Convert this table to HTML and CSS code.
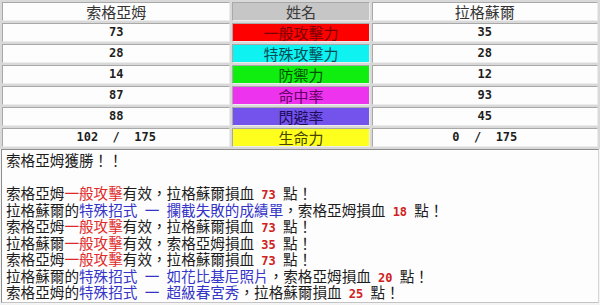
FILE: index.html
```html
<!DOCTYPE html>
<html lang="zh-Hant">
<head>
<meta charset="utf-8">
<title>對戰結果</title>
<link rel="stylesheet" href="styles.css">
</head>
<body>
<table class="stats">
  <tr>
    <td class="name side-l">索格亞姆</td>
    <td class="label head">姓名</td>
    <td class="name side-r">拉格蘇爾</td>
  </tr>
  <tr>
    <td class="num">73</td>
    <td class="label atk">一般攻擊力</td>
    <td class="num">35</td>
  </tr>
  <tr>
    <td class="num">28</td>
    <td class="label sp">特殊攻擊力</td>
    <td class="num">28</td>
  </tr>
  <tr>
    <td class="num">14</td>
    <td class="label def">防禦力</td>
    <td class="num">12</td>
  </tr>
  <tr>
    <td class="num">87</td>
    <td class="label hit">命中率</td>
    <td class="num">93</td>
  </tr>
  <tr>
    <td class="num">88</td>
    <td class="label eva">閃避率</td>
    <td class="num">45</td>
  </tr>
  <tr>
    <td class="num">102  /  175</td>
    <td class="label hp">生命力</td>
    <td class="num">0  /  175</td>
  </tr>
</table>
<div class="log">
  <div class="line">索格亞姆獲勝！！</div>
  <div class="line blank">&nbsp;</div>
  <div class="line">索格亞姆<span class="red">一般攻擊</span>有效，拉格蘇爾損血<span class="dmg"> 73 </span>點！</div>
  <div class="line">拉格蘇爾的<span class="blue">特殊招式 一 攔截失敗的成績單</span>，索格亞姆損血<span class="dmg"> 18 </span>點！</div>
  <div class="line">索格亞姆<span class="red">一般攻擊</span>有效，拉格蘇爾損血<span class="dmg"> 73 </span>點！</div>
  <div class="line">拉格蘇爾<span class="red">一般攻擊</span>有效，索格亞姆損血<span class="dmg"> 35 </span>點！</div>
  <div class="line">索格亞姆<span class="red">一般攻擊</span>有效，拉格蘇爾損血<span class="dmg"> 73 </span>點！</div>
  <div class="line">拉格蘇爾的<span class="blue">特殊招式 一 如花比基尼照片</span>，索格亞姆損血<span class="dmg"> 20 </span>點！</div>
  <div class="line">索格亞姆的<span class="blue">特殊招式 一 超級春宮秀</span>，拉格蘇爾損血<span class="dmg"> 25 </span>點！</div>
</div>
</body>
</html>
```
FILE: styles.css
```css
html, body {
  margin: 0;
  padding: 0;
}
body {
  background: #f4f4f4;
  width: 600px;
  height: 305px;
  overflow: hidden;
  font-family: "Noto Sans CJK TC", "Noto Sans CJK SC", sans-serif;
  color: #222;
}
.stats {
  width: 600px;
  border-collapse: separate;
  border-spacing: 2px;
  background: #d9d9d9;
  table-layout: fixed;
}
.stats td {
  height: 17px;
  padding: 0;
  border: 1px solid;
  border-color: #a8a8a8 #ececec #ececec #a8a8a8;
  background: #fdfdfd;
  text-align: center;
  vertical-align: middle;
  line-height: 17px;
  white-space: pre;
  overflow: hidden;
}
.side-l { width: 226px; }
.side-r { width: 224px; }
.name {
  font-size: 15px;
  color: #333;
}
.num {
  font-family: "DejaVu Sans Mono", "Liberation Mono", monospace;
  font-weight: bold;
  font-size: 12px;
  color: #1e1e1e;
}
.label {
  width: 135px;
  font-size: 15px;
}
.head {
  background-color: #c6c6c6 !important;
  background-image: radial-gradient(circle, #b2b2b2 0.6px, transparent 0.9px);
  background-size: 3px 3px;
  color: #3a3a3a;
}
.atk { background: #ff0000 !important; color: #780000; }
.sp { background: #0ff2f2 !important; color: #004e55; }
.def { background: #10ee10 !important; color: #005200; }
.hit { background: #ee33ee !important; color: #650065; }
.eva { background: #7452ec !important; color: #1c0e5c; }
.hp { background: #ffff1e !important; color: #454500; }

.log {
  margin: 0 1px;
  height: 150px;
  border: 1px solid;
  border-color: #8e8e8e #d6d6d6 #c4c4c4 #8e8e8e;
  background: #fdfdfd;
  padding: 2px 3px 0 4px;
  font-size: 14.6px;
  line-height: 16.5px;
  color: #1c1c1c;
  overflow: hidden;
}
.line {
  white-space: nowrap;
  height: 16.5px;
  overflow: visible;
}
.red {
  color: #e02a2a;
}
.blue {
  color: #3434c8;
  word-spacing: 4px;
}
.dmg {
  font-family: "DejaVu Sans Mono", "Liberation Mono", monospace;
  font-weight: bold;
  font-size: 12px;
  line-height: 1;
  color: #d02020;
  white-space: pre;
}
```
